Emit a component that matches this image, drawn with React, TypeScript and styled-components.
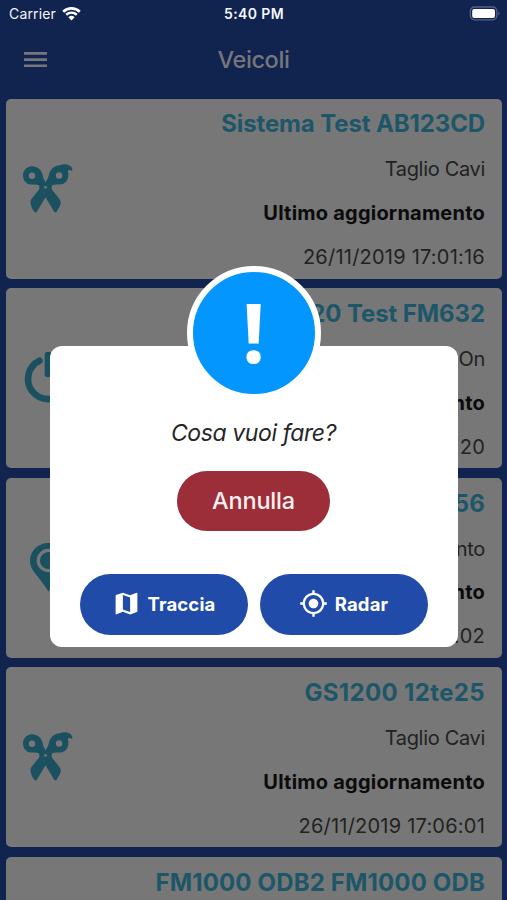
import React from "react";
import styled, { createGlobalStyle } from "styled-components";
import { MdMap, MdMyLocation } from "react-icons/md";

const GlobalStyle = createGlobalStyle`
  * { box-sizing: border-box; }
  html, body { margin: 0; height: 100%; overflow: hidden; background: #11234f; }
  body { font-family: Inter, "Liberation Sans", sans-serif; }
  button { font: inherit; border: 0; padding: 0; margin: 0; }
`;

const Screen = styled.div`
  position: relative;
  width: 507px;
  height: 900px;
  overflow: hidden;
  background: #11234f;
`;

const StatusBar = styled.div`
  display: grid;
  grid-template-columns: 1fr auto 1fr;
  align-items: center;
  height: 28px;
  padding: 0 6px 0 9px;
  color: #f4f6fa;
  font-size: 14px;
  line-height: 28px;
`;

const Carrier = styled.div`
  display: flex;
  align-items: center;
  gap: 6px;
  letter-spacing: 0.15px;
`;

const Clock = styled.div`
  font-weight: 600;
  letter-spacing: 0.38px;
  margin-right: 2px;
`;

const Battery = styled.div`
  display: flex;
  justify-content: flex-end;
`;

const Header = styled.header`
  display: grid;
  grid-template-columns: 60px 1fr 60px;
  align-items: center;
  height: 70.5px;
  padding: 0 0 7px;
`;

const MenuButton = styled.button`
  display: flex;
  justify-content: flex-end;
  padding-right: 13px;
  background: none;
`;

const Title = styled.h1`
  margin: 0;
  text-align: center;
  font-size: 23.5px;
  font-weight: 500;
  line-height: 30px;
  letter-spacing: -0.4px;
  color: #75777b;
`;

const List = styled.main`
  display: flex;
  flex-direction: column;
  gap: 9.6px;
  padding: 0 5px 0 6px;
`;

const Card = styled.article`
  display: flex;
  align-items: center;
  justify-content: space-between;
  height: 180px;
  flex: none;
  padding: 0 17px 0 16px;
  border-radius: 5px;
  background: #777;
`;

const CardIcon = styled.div`
  display: flex;
  width: 52px;
  height: 52px;
  color: #1a5060;
`;

const Details = styled.div`
  display: flex;
  flex-direction: column;
  align-items: flex-end;
  height: 180px;
  padding-top: 9.9px;
  white-space: nowrap;
  color: #222;
  font-size: 20px;
`;

const Vehicle = styled.h2<{ $track: number }>`
  margin: 0 0 14px;
  font-size: 24px;
  line-height: 32px;
  font-weight: 650;
  letter-spacing: ${(p) => p.$track}px;
  color: #1d5668;
`;

const Detail = styled.div<{ $track?: number }>`
  line-height: 30px;
  margin-bottom: 13.9px;
  letter-spacing: ${(p) => p.$track ?? 0}px;
`;

const Strong = styled(Detail)`
  font-weight: 700;
  color: #0b0b0b;
`;

const Overlay = styled.div`
  position: absolute;
  inset: 0;
  display: flex;
  justify-content: center;
  align-items: flex-start;
  padding-top: 346px;
`;

const Dialog = styled.section`
  position: relative;
  display: flex;
  flex-direction: column;
  align-items: center;
  width: 408px;
  height: 300.5px;
  padding-top: 71px;
  border-radius: 12px;
  background: #fff;
`;

const Badge = styled.div`
  position: absolute;
  top: -80px;
  left: 137px;
  width: 134px;
  height: 134px;
  display: flex;
  justify-content: center;
  align-items: center;
  padding-bottom: 5px;
  border: 6px solid #fff;
  border-radius: 50%;
  background: #0396ff;
  color: #fff;
  font: 700 83px/118px "Open Sans", sans-serif;
`;

const Question = styled.p`
  margin: 0 0 21.5px;
  font-size: 23px;
  font-style: italic;
  line-height: 32px;
  letter-spacing: -0.4px;
  color: #262626;
`;

const Pill = styled.button<{ $tone: string; $width: number; $height: number }>`
  display: flex;
  align-items: center;
  justify-content: center;
  gap: 7px;
  width: ${(p) => p.$width}px;
  height: ${(p) => p.$height}px;
  border-radius: 31px;
  background: ${(p) => p.$tone};
  color: #fff;
`;

const Cancel = styled(Pill)`
  font-size: 23.5px;
  font-weight: 500;
  letter-spacing: -0.2px;
  color: #fbeff0;
  padding-bottom: 1px;
`;

const Action = styled(Pill)`
  font-size: 18.5px;
  font-weight: 700;
  letter-spacing: 0.15px;
  padding-bottom: 1px;
`;

const Actions = styled.div`
  display: flex;
  gap: 12px;
  margin-top: 43px;
`;

const Scissors = () => (
  <svg width="52" height="52" viewBox="0 0 52 52" fill="currentColor">
    <path
      fillRule="evenodd"
      d="M10.3 3.2C15.5 3.2 19.4 6.8 20.5 11.5C21 14.5 22.2 17.2 23.5 19.2C25 17 26.3 14.5 27 11.5C28.2 6 32 2.9 38 2.2C40 1.3 44 .7 46.5 2C49.3 3 50.7 5 50.2 8.2C48.5 6.6 47.2 6.8 45.8 7.5C48 15.5 44 21.6 37.5 21.6C34.8 21.6 32.2 21 30.3 22.3C29.4 23 29.5 24.5 29.9 26.5L37 35.5C39 38 39.1 40.5 38.2 42.5L34.6 48.8Q33.5 50 32.2 48.8L23.5 34.2L14.8 48.8Q13.5 50 12.2 48.8C9.8 45.5 8.6 42 8.6 39.5C8.6 37.5 9 36.5 10 35.3L17.1 26.5C17.5 24.5 17.6 23 16.7 22.3C14.8 21 13.5 21.6 10.2 21.6C4.8 21.6 1 17.5 1 12.4C1 7 5.2 3.2 10.3 3.2ZM13.2 12.7A3.2 3.2 0 1 0 6.8 12.7A3.2 3.2 0 1 0 13.2 12.7ZM40.3 12.5A3.2 3.2 0 1 0 33.9 12.5A3.2 3.2 0 1 0 40.3 12.5ZM24.9 24.4A1.4 1.4 0 1 0 22.1 24.4A1.4 1.4 0 1 0 24.9 24.4Z"
    />
  </svg>
);

const Power = () => (
  <svg width="52" height="52" viewBox="0 0 52 52" fill="none" stroke="currentColor" strokeWidth="6.6" strokeLinecap="round">
    <path d="M17.5 8.7A20.2 20.2 0 1 0 35 8.7" />
    <path d="M26 3V22" />
  </svg>
);

const Pin = () => (
  <svg width="52" height="52" viewBox="0 0 52 52">
    <path fill="currentColor" d="M26.5 1C16 1 8 9 8 18.8C8 29 17 34 26.5 49.5C36 34 45 29 45 18.8C45 9 37 1 26.5 1Z" />
    <circle cx="26.5" cy="18.5" r="10.2" fill="none" stroke="#777" strokeWidth="3.2" />
  </svg>
);

const Wifi = () => (
  <svg width="19" height="14" viewBox="0 0 19 14" fill="none" stroke="#fff">
    <path d="M1.2 4.7C6 .3 13 .3 17.8 4.7" strokeWidth="2.7" />
    <path d="M4.2 7.8C7.3 5.1 11.7 5.1 14.8 7.8" strokeWidth="2.5" />
    <path d="M6.4 10.2Q9.5 7.5 12.6 10.2L9.5 13.4Z" fill="#fff" stroke="none" />
  </svg>
);

const BatteryIcon = () => (
  <svg width="32" height="16" viewBox="0 0 32 16">
    <rect x="1.4" y="1" width="26.4" height="12.8" rx="4" fill="none" stroke="#55628a" strokeWidth="1.3" />
    <rect x="3.2" y="2.9" width="22.8" height="9" rx="2" fill="#fff" />
    <path d="M29.3 5.2Q31.9 7.4 29.3 9.6Z" fill="#55628a" />
  </svg>
);

const MenuIcon = () => (
  <svg width="23" height="16" viewBox="0 0 23 16" fill="#75777b">
    <path d="M0 0H23V2.7H0ZM0 6.2H23V8.9H0ZM0 12.4H23V15.1H0Z" />
  </svg>
);

const icons = { cut: Scissors, power: Power, pin: Pin };

type Entry = { name: string; status: string; date: string; icon: keyof typeof icons; track: number };

const vehicles: Entry[] = [
  { name: "Sistema Test AB123CD", status: "Taglio Cavi", date: "26/11/2019 17:01:16", icon: "cut", track: -0.12 },
  { name: "FM920 Test FM632", status: "Quadro On", date: "26/11/2019 17:04:20", icon: "power", track: -0.1 },
  { name: "Test 12356", status: "Movimento", date: "26/11/2019 17:05:02", icon: "pin", track: 0.1 },
  { name: "GS1200 12te25", status: "Taglio Cavi", date: "26/11/2019 17:06:01", icon: "cut", track: 0.35 },
  { name: "FM1000 ODB2 FM1000 ODB", status: "Quadro On", date: "26/11/2019 17:06:20", icon: "power", track: 0.15 },
];

const VehicleCard = ({ name, status, date, icon, track }: Entry) => {
  const Icon = icons[icon];
  return (
    <Card>
      <CardIcon><Icon /></CardIcon>
      <Details>
        <Vehicle $track={track}>{name}</Vehicle>
        <Detail $track={-0.32}>{status}</Detail>
        <Strong $track={0.22}>Ultimo aggiornamento</Strong>
        <Detail $track={0.22}>{date}</Detail>
      </Details>
    </Card>
  );
};

export default function App() {
  return (
    <>
      <GlobalStyle />
      <Screen>
        <StatusBar>
          <Carrier>Carrier <Wifi /></Carrier>
          <Clock>5:40 PM</Clock>
          <Battery><BatteryIcon /></Battery>
        </StatusBar>
        <Header>
          <MenuButton aria-label="Menu"><MenuIcon /></MenuButton>
          <Title>Veicoli</Title>
        </Header>
        <List>
          {vehicles.map((v) => <VehicleCard key={v.name} {...v} />)}
        </List>
        <Overlay>
          <Dialog role="dialog">
            <Badge>!</Badge>
            <Question>Cosa vuoi fare?</Question>
            <Cancel $tone="#9b2e39" $width={153} $height={60}>Annulla</Cancel>
            <Actions>
              <Action $tone="#204ba8" $width={168} $height={61}><MdMap size={29} />Traccia</Action>
              <Action $tone="#204ba8" $width={168} $height={61}><MdMyLocation size={29} />Radar</Action>
            </Actions>
          </Dialog>
        </Overlay>
      </Screen>
    </>
  );
}
